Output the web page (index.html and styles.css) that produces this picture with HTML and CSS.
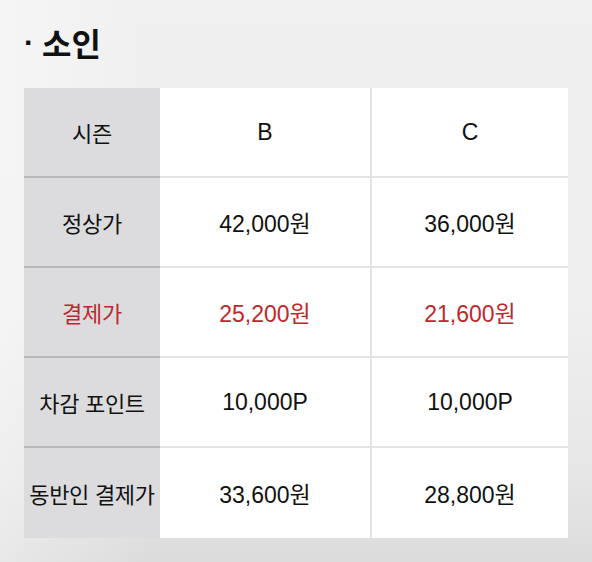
FILE: index.html
```html
<!DOCTYPE html>
<html lang="ko">
<head>
<meta charset="utf-8">
<link rel="stylesheet" href="styles.css">
</head>
<body>
<div class="page">
  <h2 class="title"><span class="dot">·</span>소인</h2>
  <table class="price">
    <tr>
      <th>시즌</th>
      <td>B</td>
      <td class="c3">C</td>
    </tr>
    <tr>
      <th>정상가</th>
      <td>42,000원</td>
      <td class="c3">36,000원</td>
    </tr>
    <tr class="red">
      <th>결제가</th>
      <td>25,200원</td>
      <td class="c3">21,600원</td>
    </tr>
    <tr>
      <th>차감 포인트</th>
      <td>10,000P</td>
      <td class="c3">10,000P</td>
    </tr>
    <tr class="last">
      <th>동반인 결제가</th>
      <td>33,600원</td>
      <td class="c3">28,800원</td>
    </tr>
  </table>
</div>
</body>
</html>
```
FILE: styles.css
```css
html, body {
  margin: 0;
  padding: 0;
}
body {
  width: 592px;
  height: 562px;
  overflow: hidden;
  background:
    linear-gradient(90deg, rgba(255,255,255,0.35) 0%, rgba(255,255,255,0) 25%),
    linear-gradient(180deg, #f1f0f0 0%, #f0efef 55%, #e6e6e6 85%, #dcdcdc 100%);
  font-family: "Liberation Sans", "Noto Sans CJK KR", sans-serif;
  color: #111;
}
.page {
  padding: 24px 24px 0 24px;
}
.title {
  margin: 0 0 28px 0;
  height: 36px;
  line-height: 36px;
  font-size: 32px;
  font-weight: 700;
  font-family: "Noto Sans CJK KR", sans-serif;
  color: #111;
  display: flex;
  align-items: center;
}
.dot {
  font-family: "Liberation Sans", sans-serif;
  font-size: 30px;
  font-weight: 700;
  margin-right: 8px;
  margin-left: 0;
  position: relative;
  top: 1px;
}
.price {
  border-collapse: collapse;
  width: 544px;
  table-layout: fixed;
}
.price th,
.price td {
  height: 88px;
  padding: 0;
  text-align: center;
  vertical-align: middle;
  border-bottom: 2px solid #e4e4e4;
}
.price th {
  width: 136px;
  background: #dcdcde;
  font-family: "Noto Sans CJK KR", sans-serif;
  font-weight: 400;
  font-size: 22px;
  letter-spacing: -0.3px;
  color: #111;
  border-bottom-color: #b9b9bb;
  white-space: nowrap;
}
.price td {
  width: 210px;
  background: #fff;
  font-size: 23px;
  color: #111;
}
.price td.c3 {
  width: auto;
  border-left: 2px solid #e4e4e4;
}
.price tr.red th,
.price tr.red td {
  color: #c0272d;
}
.price tr.last th,
.price tr.last td {
  border-bottom: none;
  height: 90px;
}
```
